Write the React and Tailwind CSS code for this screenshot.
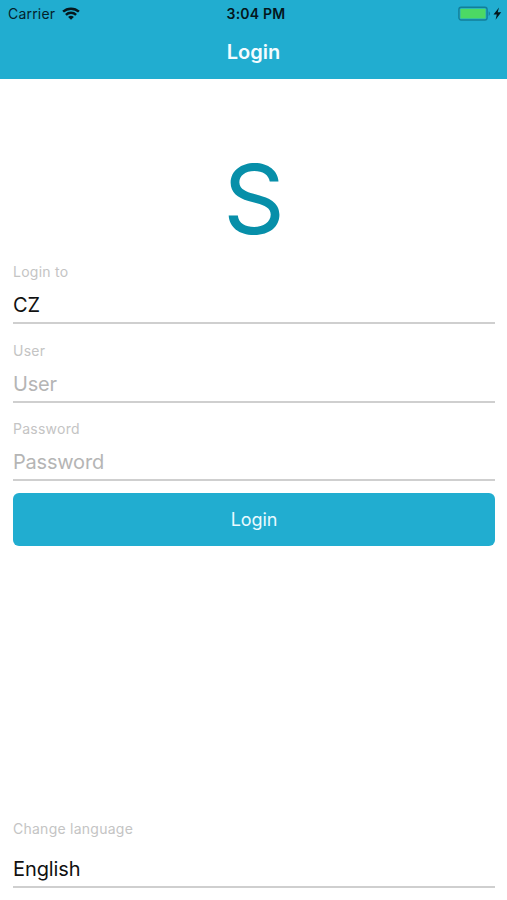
function StatusBar() {
  return (
    <div className="grid h-[27px] grid-cols-3 items-center text-black">
      <div className="flex items-center pl-[8px]">
        <span className="w-[47px] whitespace-nowrap text-[14px] leading-[27px] tracking-[0.2px] text-[#04222b]">Carrier</span>
        <svg className="ml-[7px] h-[13px] w-[18px]" viewBox="0 0 18 13" fill="none" stroke="#06181d" strokeWidth="2.5">
          <path d="M1.1 4.700C5.500.6 12.500.6 16.900 4.700" />
          <path d="M3.900 7.800c2.900-2.700 7.300-2.700 10.200 0" />
          <path d="M6.100 9.900c1.700-1.500 4.100-1.500 5.800 0L9 12.700z" fill="#06181d" stroke="none" />
        </svg>
      </div>
      <div className="text-center text-[14px] font-semibold leading-[27px] tracking-[0.2px] text-[#04161c]">
        <span className="ml-[5px]">3:04 PM</span>
      </div>
      <div className="flex items-center justify-end pr-[5px]">
        <svg className="h-[15px] w-[44px]" viewBox="0 0 44 15">
          <rect x="0.900" y="1.200" width="28.200" height="12.800" rx="2.200" fill="none" stroke="#137f98" strokeWidth="1.400" />
          <rect x="2.400" y="2.700" width="25.200" height="9.800" rx="0.600" fill="#4cd964" />
          <path d="M30.700 5.300c1.700.8 1.700 3.800 0 4.600z" fill="#137f98" />
          <path d="M41 1.500L35.500 8.500h3.300l-1.200 5.300 5.600-7.500h-3.500z" fill="#04161c" />
        </svg>
      </div>
    </div>
  );
}

function Field({ label, children, tall }) {
  return (
    <div className={tall ? "h-[69px] border-b-2 border-[#cfcfcf]" : "h-[62px] border-b-2 border-[#cfcfcf]"}>
      <div className="h-[20px] text-[14px] leading-[20px] tracking-[0.25px] text-[#c4c4c4]">{label}</div>
      <div className={tall ? "pt-[15px] text-[20px] leading-[30px] tracking-[-0.1px]" : "pt-[8px] text-[20px] leading-[30px] tracking-[-0.2px]"}>{children}</div>
    </div>
  );
}

export default function App() {
  return (
    <div className="flex h-[900px] w-[507px] flex-col overflow-hidden bg-white font-['Inter','Liberation_Sans',sans-serif]">
      <header className="h-[79px] bg-[#21add0]">
        <StatusBar />
        <h1 className="text-center text-[20px] font-semibold leading-[51px] text-[#f4fcff]">Login</h1>
      </header>
      <main className="flex flex-1 flex-col pl-[13px] pr-[12px]">
        <div className="h-[183px] pt-[60px] text-center text-[96px] leading-[120px] text-[#078fa9]">S</div>
        <form className="flex flex-col">
          <Field label="Login to">
            <span className="text-[#111]">CZ</span>
          </Field>
          <div className="mt-[17px]">
            <Field label="User">
              <span className="text-[#b5b5b5]">User</span>
            </Field>
          </div>
          <div className="mt-[16px]">
            <Field label="Password">
              <span className="text-[#b5b5b5]">Password</span>
            </Field>
          </div>
        </form>
        <button type="button" className="mt-[12px] h-[53px] w-full rounded-[6px] bg-[#21add0] text-[18px] tracking-[-0.1px] text-[#eafaff]">
          Login
        </button>
        <div className="mt-auto mb-[12px]">
          <Field label="Change language" tall>
            <span className="text-[#111]">English</span>
          </Field>
        </div>
      </main>
    </div>
  );
}
